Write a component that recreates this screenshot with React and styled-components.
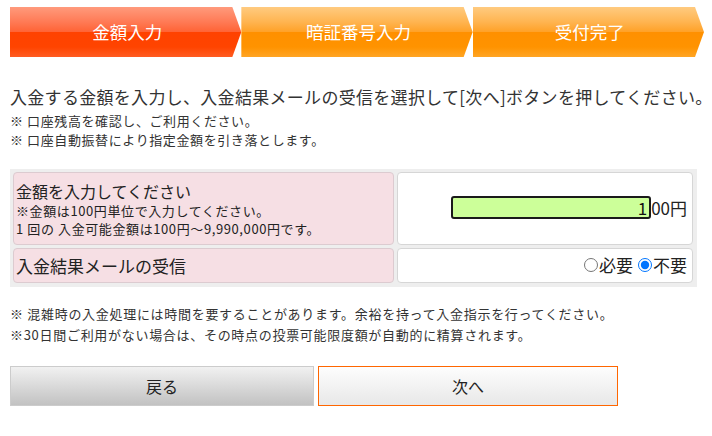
import React from "react";
import styled, { createGlobalStyle } from "styled-components";

const Global = createGlobalStyle`
  html, body { margin: 0; padding: 0; background: #fff; }
  body { font-family: "Noto Sans CJK JP", "Noto Sans", sans-serif; color: #333; }
  * { box-sizing: border-box; }
`;

const Page = styled.div`
  width: 712px;
  padding: 7px 0 0 10px;
`;

const Steps = styled.div`
  display: flex;
  width: 694px;
  height: 50px;
`;

const Step = styled.div`
  flex: 1;
  display: flex;
  align-items: center;
  justify-content: center;
  padding-left: 3px;
  color: #fff;
  font-size: 17.5px;
  line-height: 1;
  clip-path: polygon(0 0, calc(100% - 9px) 0, 100% 50%, calc(100% - 9px) 100%, 0 100%);
  background: ${(p) =>
    p.$active
      ? "linear-gradient(#ff9a7c 0%, #ff7a55 30%, #ff6436 49%, #ff4200 51%, #ff4400 80%, #ff5c22 100%)"
      : "linear-gradient(#ffcb80 0%, #ffb450 30%, #ffa229 49%, #ff9000 51%, #ff9300 80%, #ffa524 100%)"};
`;

const Heading = styled.div`
  margin-top: 30px;
  font-size: 17px;
  letter-spacing: 0.3px;
  line-height: 20px;
  color: #333;
  white-space: nowrap;
`;

const Notes = styled.div`
  margin-top: ${(p) => p.$mt}px;
  font-size: 13px;
  letter-spacing: ${(p) => p.$ls}px;
  line-height: ${(p) => p.$lh}px;
  color: #333;
  white-space: nowrap;
`;

const Form = styled.div`
  margin-top: 20px;
  width: 687px;
  background: #eeeeee;
  padding: 3px 4px 4px 3px;
  display: grid;
  grid-template-columns: 381px 296px;
  grid-template-rows: 73px 35px;
  gap: 3px;
`;

const Label = styled.div`
  background: #f6dfe4;
  border: 1px solid #dccbd0;
  border-radius: 4px;
  padding: 0 2px;
  display: flex;
  flex-direction: column;
  justify-content: center;
  color: #222;
`;

const LabelMain = styled.div`
  font-size: ${(p) => p.$size}px;
  line-height: 22px;
`;

const LabelSub = styled.div`
  font-size: 13px;
  letter-spacing: 0.6px;
  line-height: 18px;
`;

const Value = styled.div`
  background: #fff;
  border: 1px solid #d6d6d6;
  border-radius: 4px;
  display: flex;
  align-items: center;
  justify-content: flex-end;
  padding: 0 5px 2px 0;
  font-size: 17px;
  color: #222;
`;

const AmountInput = styled.input`
  width: 200px;
  height: 23px;
  border: 2px solid #1a1a1a;
  border-radius: 3px;
  background: #ccff99;
  text-align: right;
  font-family: inherit;
  font-size: 17px;
  color: #111;
  padding: 0 2px 0 0;
  margin: 0;
  outline: none;
`;

const Unit = styled.span`
  font-size: 17px;
  line-height: 1;
`;

const RadioLabel = styled.label`
  display: inline-flex;
  align-items: center;
  font-size: 17px;
  margin-left: ${(p) => p.$ml}px;
`;

const Radio = styled.input`
  width: 14px;
  height: 14px;
  margin: 0 1px 0 0;
  accent-color: #0075ff;
`;

const Buttons = styled.div`
  margin-top: 21px;
  display: flex;
  gap: 4px;
`;

const Button = styled.button`
  width: ${(p) => p.$w}px;
  height: 40px;
  margin: 0;
  font-family: inherit;
  font-size: 16px;
  color: #222;
  border: 1px solid ${(p) => (p.$primary ? "#ff6600" : "#cccccc")};
  background: ${(p) =>
    p.$primary
      ? "linear-gradient(#fdfdfd, #e8e8e8)"
      : "linear-gradient(#f1f1f1, #c2c2c2)"};
  cursor: pointer;
`;

export default function App() {
  return (
    <Page>
      <Global />
      <Steps>
        <Step $active>金額入力</Step>
        <Step>暗証番号入力</Step>
        <Step>受付完了</Step>
      </Steps>
      <Heading>入金する金額を入力し、入金結果メールの受信を選択して[次へ]ボタンを押してください。</Heading>
      <Notes $mt={4} $lh={19} $ls={0.6}>
        <div>※ 口座残高を確認し、ご利用ください。</div>
        <div>※ 口座自動振替により指定金額を引き落とします。</div>
      </Notes>
      <Form>
        <Label>
          <LabelMain $size={16}>金額を入力してください</LabelMain>
          <LabelSub>※金額は100円単位で入力してください。</LabelSub>
          <LabelSub>1 回の 入金可能金額は100円～9,990,000円です。</LabelSub>
        </Label>
        <Value>
          <AmountInput defaultValue="1" />
          <Unit>00円</Unit>
        </Value>
        <Label>
          <LabelMain $size={17}>入金結果メールの受信</LabelMain>
        </Label>
        <Value>
          <RadioLabel $ml={0}>
            <Radio type="radio" name="mail" />
            必要
          </RadioLabel>
          <RadioLabel $ml={5}>
            <Radio type="radio" name="mail" defaultChecked />
            不要
          </RadioLabel>
        </Value>
      </Form>
      <Notes $mt={16} $lh={21} $ls={0.7}>
        <div>※ 混雑時の入金処理には時間を要することがあります。余裕を持って入金指示を行ってください。</div>
        <div>※30日間ご利用がない場合は、その時点の投票可能限度額が自動的に精算されます。</div>
      </Notes>
      <Buttons>
        <Button $w={304}>戻る</Button>
        <Button $w={300} $primary>次へ</Button>
      </Buttons>
    </Page>
  );
}
